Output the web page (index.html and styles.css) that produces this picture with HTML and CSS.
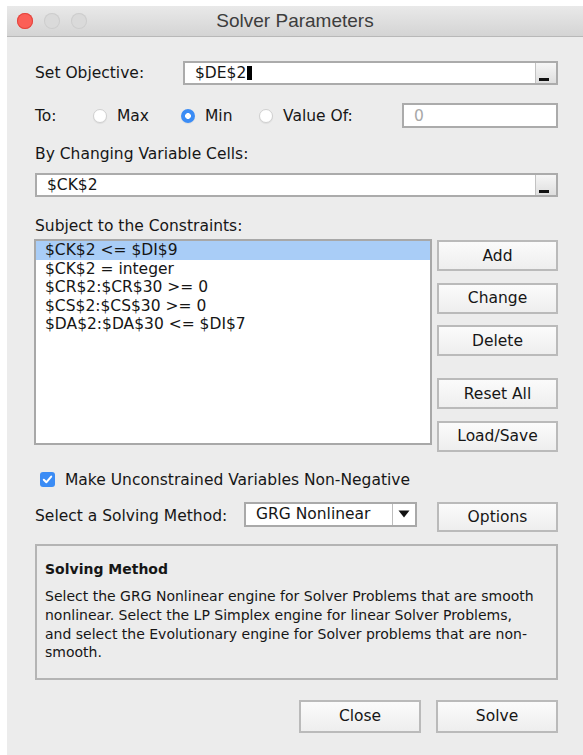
FILE: index.html
```html
<!DOCTYPE html>
<html lang="en">
<head>
<meta charset="utf-8">
<title>Solver Parameters</title>
<link rel="stylesheet" href="styles.css">
</head>
<body>
<div class="window">
  <header class="titlebar">
    <div class="lights">
      <span class="light light-close"></span>
      <span class="light"></span>
      <span class="light"></span>
    </div>
    <div class="title">Solver Parameters</div>
  </header>

  <main class="content">
    <div class="row row-objective">
      <label class="lbl lbl-objective">Set Objective:</label>
      <div class="field field-ref">
        <span class="field-text">$DE$2<span class="caret"></span></span>
        <span class="collapse-btn"><span class="collapse-bar"></span></span>
      </div>
    </div>

    <div class="row row-to">
      <span class="lbl lbl-to">To:</span>
      <span class="opt opt-max"><span class="radio"></span>Max</span>
      <span class="opt opt-min"><span class="radio radio-on"></span>Min</span>
      <span class="opt opt-value"><span class="radio"></span>Value Of:</span>
      <div class="field field-value"><span class="field-text muted">0</span></div>
    </div>

    <div class="caption caption-changing">By Changing Variable Cells:</div>
    <div class="field field-ref field-changing">
      <span class="field-text">$CK$2</span>
      <span class="collapse-btn"><span class="collapse-bar"></span></span>
    </div>

    <div class="caption caption-subject">Subject to the Constraints:</div>
    <div class="constraints">
      <ul class="list">
        <li class="list-item selected">$CK$2 &lt;= $DI$9</li>
        <li class="list-item">$CK$2 = integer</li>
        <li class="list-item">$CR$2:$CR$30 &gt;= 0</li>
        <li class="list-item">$CS$2:$CS$30 &gt;= 0</li>
        <li class="list-item">$DA$2:$DA$30 &lt;= $DI$7</li>
      </ul>
      <div class="side-buttons">
        <button class="btn">Add</button>
        <button class="btn">Change</button>
        <button class="btn">Delete</button>
        <button class="btn btn-spaced">Reset All</button>
        <button class="btn">Load/Save</button>
      </div>
    </div>

    <div class="row row-check">
      <span class="checkbox">
        <svg viewBox="0 0 15 15" width="15" height="15"><path d="M3.8 7.8 L6.3 10.3 L11.2 4.6" fill="none" stroke="#fff" stroke-width="2" stroke-linecap="round" stroke-linejoin="round"/></svg>
      </span>
      <span class="check-label">Make Unconstrained Variables Non-Negative</span>
    </div>

    <div class="row row-method">
      <span class="lbl lbl-method">Select a Solving Method:</span>
      <div class="select">
        <span class="select-text">GRG Nonlinear</span>
        <span class="select-arrow">
          <svg viewBox="0 0 12 8" width="12" height="8"><path d="M0.5 0.5 H11.5 L6 7.5 Z" fill="#111"/></svg>
        </span>
      </div>
      <button class="btn btn-options">Options</button>
    </div>

    <section class="method-box">
      <h2 class="method-title">Solving Method</h2>
      <p class="method-text">Select the GRG Nonlinear engine for Solver Problems that are smooth nonlinear. Select the LP Simplex engine for linear Solver Problems, and select the Evolutionary engine for Solver problems that are non-smooth.</p>
    </section>

    <div class="footer">
      <button class="btn btn-footer">Close</button>
      <button class="btn btn-footer">Solve</button>
    </div>
  </main>
</div>
</body>
</html>
```

FILE: styles.css
```css
html, body {
  margin: 0;
  padding: 0;
  background: #ffffff;
}

body {
  font-family: "DejaVu Sans", "Noto Sans", sans-serif;
  font-size: 15.5px;
  color: #161616;
}

.window {
  margin: 6px 0 0 7px;
  width: 576px;
  height: 749px;
  background: #ececec;
  display: flex;
  flex-direction: column;
  overflow: hidden;
}

/* ---- title bar ---- */
.titlebar {
  height: 30px;
  flex: none;
  display: flex;
  align-items: center;
  position: relative;
  background: linear-gradient(#e9e9e9, #d4d4d4);
  border-bottom: 1px solid #b8b8b8;
}

.lights {
  display: flex;
  gap: 11px;
  padding-left: 10px;
}

.light {
  width: 16px;
  height: 16px;
  border-radius: 50%;
  background: #dadada;
  box-shadow: inset 0 0 0 1px #cdcdcd;
}

.light-close {
  background: #fb5f57;
  box-shadow: inset 0 0 0 1px #e2463f;
}

.title {
  position: absolute;
  left: 0;
  right: 0;
  text-align: center;
  font-family: "Liberation Sans", Arial, sans-serif;
  font-size: 19px;
  color: #3d3d3d;
  pointer-events: none;
}

/* ---- content ---- */
.content {
  padding: 24px 25px 0 28px;
  display: flex;
  flex-direction: column;
}

.row {
  display: flex;
  align-items: center;
}

.lbl-objective {
  width: 148px;
  flex: none;
}

.field {
  box-sizing: border-box;
  height: 24px;
  background: #ffffff;
  border: 2px solid #ababab;
  display: flex;
  align-items: center;
  flex: 1;
}

.field-text {
  padding-left: 10px;
  flex: 1;
  display: flex;
  align-items: center;
  white-space: nowrap;
}

.muted {
  color: #a8a8a8;
}

.caret {
  display: inline-block;
  width: 5px;
  height: 14px;
  margin-left: 1px;
  background: #000;
}

.collapse-btn {
  align-self: stretch;
  width: 21px;
  flex: none;
  border-left: 1px solid #c2c2c2;
  background: linear-gradient(#f6f6f6, #dedede);
  display: flex;
  align-items: flex-end;
  padding: 0 0 2px 3px;
  box-sizing: border-box;
}

.collapse-bar {
  width: 10px;
  height: 3px;
  background: #111;
}

/* radio row */
.row-to {
  margin-top: 18px;
}

.lbl-to {
  width: 58px;
  flex: none;
}

.opt {
  display: flex;
  align-items: center;
  gap: 10px;
  flex: none;
}

.opt-max { width: 88px; }
.opt-min { width: 78px; }
.opt-value { width: 143px; }

.radio {
  box-sizing: border-box;
  width: 14px;
  height: 14px;
  border-radius: 50%;
  background: #ffffff;
  border: 1px solid #d0d0d0;
  box-shadow: 0 1px 1px rgba(0, 0, 0, 0.06);
  flex: none;
}

.radio-on {
  border: none;
  background: radial-gradient(circle, #ffffff 0 2.6px, #3b8cf5 3.2px);
}

.field-value {
  height: 25px;
}

.caption {
  line-height: 20px;
}

.caption-changing {
  margin-top: 16px;
}

.field-changing {
  margin-top: 9px;
  flex: none;
}

.caption-subject {
  margin-top: 19px;
}

/* constraints list + side buttons */
.constraints {
  margin-top: 3px;
  display: flex;
  align-items: flex-start;
}

.list {
  box-sizing: border-box;
  list-style: none;
  margin: 0 0 0 -1px;
  padding: 0;
  width: 398px;
  height: 206px;
  background: #ffffff;
  border: 2px solid #a8a8a8;
}

.list-item {
  height: 18.5px;
  line-height: 18.5px;
  padding-left: 9px;
  white-space: nowrap;
}

.list-item.selected {
  background: #a9cdf7;
}

.side-buttons {
  margin-left: auto;
  margin-top: 1px;
  width: 121px;
  display: flex;
  flex-direction: column;
  gap: 11.5px;
}

.btn {
  box-sizing: border-box;
  height: 31px;
  font-family: inherit;
  font-size: 15.5px;
  color: #161616;
  background: linear-gradient(#fbfbfb, #eeeeee);
  border: 2px solid #bababa;
  border-radius: 0;
  padding: 0;
}

.btn-spaced {
  margin-top: 10.5px;
}

/* checkbox row */
.row-check {
  margin-top: 18px;
  padding-left: 5px;
  gap: 10px;
  height: 20px;
}

.checkbox {
  width: 15px;
  height: 15px;
  border-radius: 3px;
  background: #3b8cf5;
  display: flex;
}

/* solving method row */
.row-method {
  margin-top: 12px;
  align-items: flex-start;
}

.lbl-method {
  width: 209px;
  flex: none;
  line-height: 28px;
}

.select {
  box-sizing: border-box;
  width: 173px;
  height: 25px;
  background: #ffffff;
  border: 2px solid #a9a9a9;
  display: flex;
  align-items: center;
  flex: none;
}

.select-text {
  flex: 1;
  padding-left: 10px;
  white-space: nowrap;
}

.select-arrow {
  align-self: stretch;
  width: 22px;
  border-left: 1px solid #bdbdbd;
  display: flex;
  align-items: center;
  justify-content: center;
}

.btn-options {
  margin-left: auto;
  width: 121px;
  height: 30px;
}

/* description */
.method-box {
  box-sizing: border-box;
  margin-top: 12px;
  height: 136px;
  border: 2px solid #b4b4b4;
  padding: 14px 14px 0 8px;
  font-size: 14px;
}

.method-title {
  margin: 0 0 9px;
  font-size: 14px;
  font-weight: bold;
  line-height: 18.7px;
}

.method-text {
  margin: 0;
  line-height: 18.7px;
}

.footer {
  margin-top: 20px;
  display: flex;
  justify-content: flex-end;
  gap: 15px;
}

.btn-footer {
  width: 122px;
  height: 33px;
}
```
